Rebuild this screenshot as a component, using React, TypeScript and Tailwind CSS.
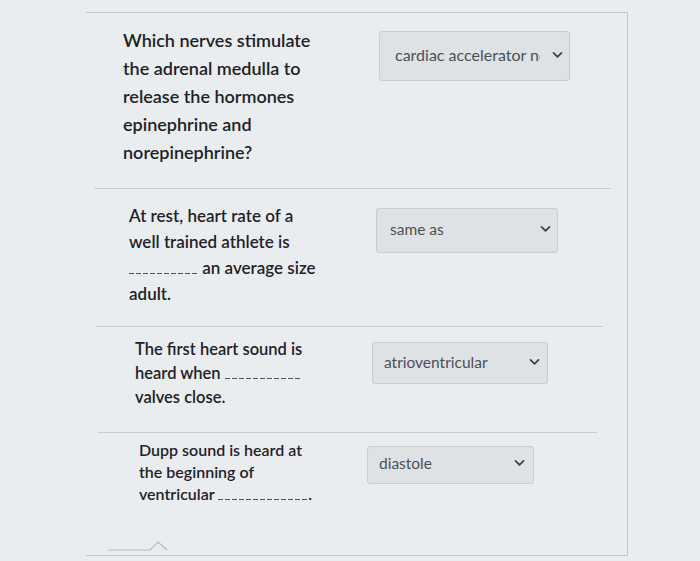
const font = { fontFamily: 'Lato, "Noto Sans", sans-serif' };

function Blank({ w }: { w: string }) {
  return (
    <span
      className={`inline-block ${w} h-[1em] align-baseline bg-[repeating-linear-gradient(90deg,#505459_0_5px,transparent_5px_7px)] bg-bottom bg-no-repeat bg-[length:100%_1.5px]`}
    />
  );
}

function Chevron() {
  return (
    <svg width="11" height="8" viewBox="0 0 11 8" className="shrink-0">
      <path d="M1.5 1.8 L5.5 5.8 L9.5 1.8" fill="none" stroke="#3b4046" strokeWidth="1.7" strokeLinecap="round" strokeLinejoin="round" />
    </svg>
  );
}

function Select({ value, cls, textCls }: { value: string; cls: string; textCls: string }) {
  return (
    <div className={`flex items-center justify-between rounded-[3px] border border-[#c9cdd1] bg-[#dfe2e5] ${cls}`}>
      <span className={`overflow-hidden whitespace-nowrap text-[#4b5056] ${textCls}`}>{value}</span>
      <Chevron />
    </div>
  );
}

export default function App() {
  return (
    <div className="w-[700px] h-[561px] bg-[#eaedf0] overflow-hidden" style={font}>
      <div className="ml-[86px] mt-[12px] w-[542px] h-[544px] border-r border-b border-t border-[#c3c7cb]">
        {/* row 1 */}
        <div className="flex pt-[13px] h-[175px]">
          <div className="w-[293px] pl-[37px] text-[18px] leading-[28px] font-semibold text-[#1e2227]">
            Which nerves stimulate
            <br />
            the adrenal medulla to
            <br />
            release the hormones
            <br />
            epinephrine and
            <br />
            norepinephrine?
          </div>
          <Select
            value="cardiac accelerator nerves"
            cls="mt-[5px] w-[191px] h-[50px] pl-[15px] pr-[6px] pb-[2px]"
            textCls="w-[145px] text-[16px] leading-[22px]"
          />
        </div>
        {/* row 2 */}
        <div className="flex border-t border-[#c9cdd1] pt-[14px] h-[138px] ml-[8px] mr-[16px]">
          <div className="w-[282px] pl-[35px] text-[17px] leading-[26px] font-semibold text-[#1e2227]">
            At rest, heart rate of a
            <br />
            well trained athlete is
            <br />
            <Blank w="w-[69px]" /> an average size
            <br />
            adult.
          </div>
          <Select
            value="same as"
            cls="mt-[5px] w-[182px] h-[45px] pl-[13px] pr-[6px] pb-[4px]"
            textCls="text-[15.5px] leading-[22px]"
          />
        </div>
        {/* row 3 */}
        <div className="flex border-t border-[#c9cdd1] pt-[10px] h-[106px] ml-[10px] mr-[24px]">
          <div className="w-[276px] pl-[39px] text-[16.5px] leading-[24px] font-semibold text-[#1e2227]">
            The first heart sound is
            <br />
            heard when <Blank w="w-[75px]" />
            <br />
            valves close.
          </div>
          <Select
            value="atrioventricular"
            cls="mt-[5px] w-[176px] h-[42px] pl-[11px] pr-[7px] pb-[3px]"
            textCls="text-[15.5px] leading-[22px]"
          />
        </div>
        {/* row 4 */}
        <div className="flex border-t border-[#c9cdd1] pt-[6px] h-[125px] ml-[12px] mr-[30px]">
          <div className="w-[269px] pl-[41px] text-[16px] leading-[22px] font-semibold text-[#1e2227]">
            Dupp sound is heard at
            <br />
            the beginning of
            <br />
            ventricular <Blank w="w-[90px]" />.
          </div>
          <Select
            value="diastole"
            cls="mt-[7px] w-[167px] h-[38px] pl-[11px] pr-[8px] pb-[4px]"
            textCls="text-[15.5px] leading-[22px]"
          />
        </div>
      </div>
      <svg width="80" height="16" viewBox="0 0 80 16" className="-mt-[19px] ml-[108px] block">
        <path d="M0 13 L42 13 L50 5 L59 13" fill="none" stroke="#b5b9be" strokeWidth="1.2" />
      </svg>
    </div>
  );
}
